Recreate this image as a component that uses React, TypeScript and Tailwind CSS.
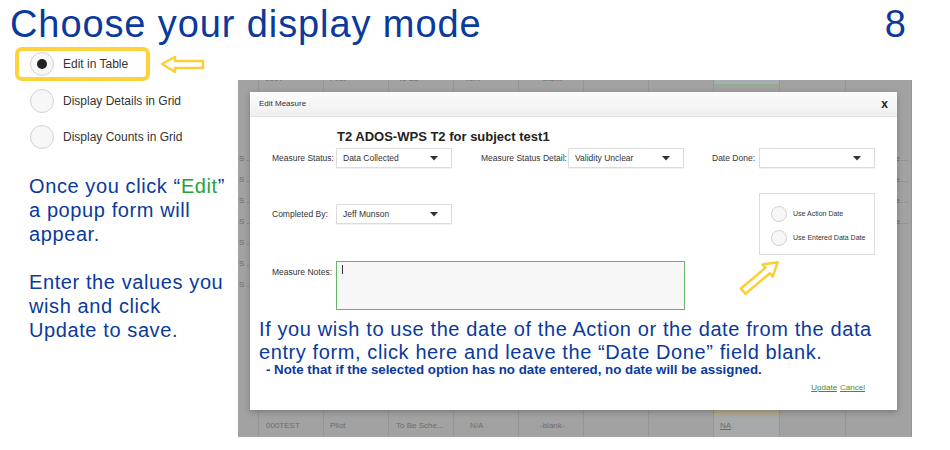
import React from 'react'

const COLS = [21, 65, 65, 65, 65, 65, 65, 65, 66, 66, 66]

function Caret() {
  return (
    <svg width="8" height="5" viewBox="0 0 8 5">
      <polygon points="0,0 8,0 4,4.5" fill="#333" />
    </svg>
  )
}

function Select({ value }: { value: string }) {
  return (
    <div className="flex h-[20px] w-[116px] items-center justify-between border border-[#dcdcdc] bg-white pl-[6px] pr-[13px] shadow-[0_1px_1px_rgba(0,0,0,0.05)]">
      <span>{value}</span>
      <Caret />
    </div>
  )
}

function BigRadio({ checked = false, label }: { checked?: boolean; label: string }) {
  return (
    <div className="flex items-center">
      <span className="flex h-[24px] w-[24px] items-center justify-center rounded-full border border-[#d2d2d2] bg-[#f7f7f7]">
        {checked && <span className="h-[10px] w-[10px] rounded-full bg-[#222]" />}
      </span>
      <span className="ml-[9px] text-[12px] text-[#333]">{label}</span>
    </div>
  )
}

function SmallRadio({ label }: { label: string }) {
  return (
    <div className="flex h-[16px] items-center">
      <span className="h-[16px] w-[16px] rounded-full border border-[#d2d2d2] bg-[#f7f7f7]" />
      <span className="ml-[6px] text-[7px] text-[#333]">{label}</span>
    </div>
  )
}

function LeftArrow() {
  return (
    <svg width="48" height="20" viewBox="0 0 48 20" className="ml-[8px]">
      <polygon
        points="4,10 17,3 17,7 45,7 45,14 17,14 17,18"
        fill="white"
        stroke="#fbd032"
        strokeWidth="2.5"
        strokeLinejoin="round"
      />
    </svg>
  )
}

function TableRow({ cells, h, tint }: { cells: React.ReactNode[]; h: string; tint?: string }) {
  return (
    <div className={`grid grid-cols-[21px_65px_65px_65px_65px_65px_65px_65px_66px_66px_66px] ${h}`}>
      {COLS.map((_, i) => (
        <div
          key={i}
          className={`flex items-center overflow-hidden whitespace-nowrap border-r border-[#959595] text-[8px] text-[#6d6d6d] ${
            i === 8 && tint ? tint : ''
          }`}
        >
          {cells[i]}
        </div>
      ))}
    </div>
  )
}

function GrayTable() {
  const body = Array.from({ length: 15 }, (_, k) => {
    const cells: React.ReactNode[] = []
    if (k >= 3 && k <= 9) cells[0] = <span className="pl-[1px]">S ..</span>
    if (k >= 3 && k <= 6)
      cells[10] = (
        <span className="block w-full overflow-hidden text-ellipsis pl-[6px]">Validity Unclear data</span>
      )
    return cells
  })

  return (
    <div className="relative flex h-[357px] w-[674px] flex-col overflow-hidden bg-[#a2a2a2]">
      <div className="-mt-[8px]">
        <TableRow
          h="h-[13px]"
          tint="bg-[#a9adb2] border-b border-b-[#8fae8c]"
          cells={[
            '',
            <span className="pl-[6px]">000T</span>,
            <span className="pl-[6px]">Pilot</span>,
            <span className="pl-[9px]">To Be</span>,
            <span className="pl-[12px]">N/A</span>,
            <span className="pl-[21px]">-blank-</span>,
            '',
            '',
            <span className="pl-[8px]">NA</span>,
            <span className="pl-[6px]">-----</span>,
          ]}
        />
        {body.map((cells, k) => (
          <TableRow key={k} h="h-[21px]" cells={cells} />
        ))}
      </div>
      <TableRow h="flex-1" tint="bg-[#b2ab92]" cells={[]} />
      <TableRow
        h="h-[22px]"
        tint="bg-[#a7a8aa]"
        cells={[
          '',
          <span className="pl-[7px]">000TEST</span>,
          <span className="pl-[6px]">Pilot</span>,
          <span className="pl-[7px]">To Be Sche...</span>,
          <span className="pl-[16px]">N/A</span>,
          <span className="pl-[21px]">-blank-</span>,
          '',
          '',
          <span className="pl-[6px] underline">NA</span>,
        ]}
      />

      {/* dialog */}
      <div className="absolute left-[12px] top-[12px] flex h-[318px] w-[647px] flex-col bg-white text-[8.5px] text-[#333] shadow-[0_2px_6px_rgba(0,0,0,0.25)]">
        <div className="flex h-[25px] items-center justify-between border-b border-[#e2e2e2] bg-[linear-gradient(#fcfcfc,#efefef)] pl-[9px] pr-[9px]">
          <span className="text-[8px]">Edit Measure</span>
          <span className="text-[12px] font-bold text-[#222]">x</span>
        </div>

        <div className="relative flex flex-col whitespace-nowrap">
          <div className="pl-[87px] pt-[12px] text-[13px] font-bold leading-[16px] text-[#222]">
            T2 ADOS-WPS T2 for subject test1
          </div>

          <div className="mt-[3px] flex items-center pl-[22px]">
            <span className="w-[64px]">Measure Status:</span>
            <Select value="Data Collected" />
            <span className="ml-[29px] w-[87px]">Measure Status Detail:</span>
            <Select value="Validity Unclear" />
            <span className="ml-[28px] w-[47px]">Date Done:</span>
            <Select value="" />
          </div>

          <div className="mt-[25px] flex items-start justify-between pl-[22px] pr-[22px]">
            <div className="mt-[11px] flex items-center">
              <span className="w-[64px]">Completed By:</span>
              <Select value="Jeff Munson" />
            </div>
            <div className="flex h-[62px] w-[116px] flex-col gap-[8px] border border-[#dddddd] pl-[11px] pt-[12px]">
              <SmallRadio label="Use Action Date" />
              <SmallRadio label="Use Entered Data Date" />
            </div>
          </div>

          <div className="mt-[6px] flex items-start pl-[22px]">
            <span className="w-[64px] pt-[5px]">Measure Notes:</span>
            <div className="h-[49px] w-[349px] border-[1.5px] border-[#66b466] bg-[#f7f7f7] pl-[5px] pt-[3px]">
              <div className="h-[9px] w-px bg-[#333]" />
            </div>
          </div>

          <div className="mt-[8px] pl-[9px] text-[20px] leading-[23px] tracking-[0.6px] text-[#0a3a9c]">
            If you wish to use the date of the Action or the date from the data
            <br />
            entry form, click here and leave the “Date Done” field blank.
          </div>
          <div className="pl-[16px] text-[13.3px] font-bold leading-[12px] text-[#0a3a9c]">
            - Note that if the selected option has no date entered, no date will be assigned.
          </div>

          <div className="mt-[6px] flex justify-end gap-[3px] pr-[32px] text-[8px] leading-[12px] text-[#3d8c3d]">
            <span className="underline">Update</span>
            <span className="underline">Cancel</span>
          </div>

          <svg
            width="46"
            height="42"
            viewBox="0 0 46 42"
            className="absolute left-[488px] top-[140px] overflow-visible"
          >
            <g transform="rotate(-40 22 20)">
              <polygon
                points="45,20 32,12 32,16.5 0,16.5 0,23.5 32,23.5 32,28"
                fill="white"
                stroke="#fbd032"
                strokeWidth="2.5"
                strokeLinejoin="round"
              />
            </g>
          </svg>
        </div>
      </div>
    </div>
  )
}

export default function App() {
  return (
    <div className="h-[450px] w-[950px] overflow-hidden bg-white font-['Liberation_Sans',Arial,sans-serif]">
      <div className="flex h-[47px] justify-between pl-[10px] pr-[44px] pt-[5px] text-[38px] leading-[38px] text-[#0a3a9c]">
        <span className="tracking-[0.9px]">Choose your display mode</span>
        <span>8</span>
      </div>

      <div className="flex">
        <div className="w-[238px]">
          <div className="flex items-center pl-[15px]">
            <div className="flex h-[34px] w-[135px] items-center rounded-[7px] border-[4px] border-[#fdd23a] pl-[11px]">
              <BigRadio checked label="Edit in Table" />
            </div>
            <LeftArrow />
          </div>
          <div className="mt-[2px] flex h-[36px] items-center pl-[30px]">
            <BigRadio label="Display Details in Grid" />
          </div>
          <div className="flex h-[36px] items-center pl-[30px]">
            <BigRadio label="Display Counts in Grid" />
          </div>

          <div className="mt-[19px] pl-[29px] text-[20px] leading-[24px] tracking-[0.6px] text-[#0a3a9c]">
            <p>
              Once you click “<span className="text-[#1fa33a]">Edit</span>”
              <br />a popup form will
              <br />
              appear.
            </p>
            <p className="mt-[24px]">
              Enter the values you
              <br />
              wish and click
              <br />
              Update to save.
            </p>
          </div>
        </div>

        <div className="mt-[33px]">
          <GrayTable />
        </div>
      </div>
    </div>
  )
}
